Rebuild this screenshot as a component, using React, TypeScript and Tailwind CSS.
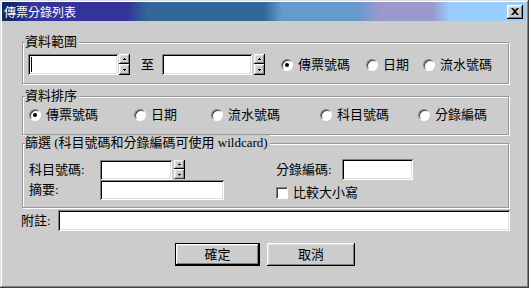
import type { ReactNode } from "react";

const sunken =
  "bg-white shadow-[inset_1px_1px_#808080,inset_-1px_-1px_#ffffff,inset_2px_2px_#000000,inset_-2px_-2px_#dfdfdf]";
const raised =
  "bg-[#cccccc] shadow-[inset_-1px_-1px_#000000,inset_1px_1px_#ffffff,inset_-2px_-2px_#808080,inset_2px_2px_#dfdfdf]";

function Spinner() {
  return (
    <div className="flex h-[21px] w-[11px] flex-col">
      <div className={`${raised} flex h-[10px] items-center justify-center`}>
        <svg width="3" height="2" viewBox="0 0 3 2">
          <path d="M1 0h1v1h1v1H0V1h1z" fill="#000" />
        </svg>
      </div>
      <div className={`${raised} flex h-[11px] items-center justify-center`}>
        <svg width="3" height="2" viewBox="0 0 3 2">
          <path d="M0 0h3v1H2v1H1V1H0z" fill="#000" />
        </svg>
      </div>
    </div>
  );
}

function Radio({ label, checked }: { label: string; checked?: boolean }) {
  return (
    <div className="flex items-center">
      <span className="flex h-3 w-3 items-center justify-center rounded-full border border-b-white border-l-[#808080] border-r-white border-t-[#808080] bg-white shadow-[inset_1px_1px_#404040]">
        {checked && <span className="h-1 w-1 rounded-full bg-black" />}
      </span>
      <span className="ml-[5px] leading-4">{label}</span>
    </div>
  );
}

function Group({ label, className, children }: { label: string; className: string; children: ReactNode }) {
  return (
    <div
      className={`relative w-[487px] border border-[#999999] shadow-[inset_1px_1px_#ffffff,1px_1px_#ffffff] ${className}`}
    >
      <span className="absolute left-[2px] top-[-9px] bg-[#cccccc] pr-[2px] leading-4 whitespace-nowrap">
        {label}
      </span>
      {children}
    </div>
  );
}

export default function App() {
  return (
    <div className="h-[288px] w-[529px] bg-[#cccccc] p-[2px] font-['Liberation_Serif','Noto_Sans_CJK_TC',serif] text-[13px] text-black shadow-[inset_-1px_-1px_#404040,inset_1px_1px_#dfdfdf,inset_-2px_-2px_#808080,inset_2px_2px_#ffffff]">
      {/* title bar */}
      <div className="flex h-[19px] w-[524px] items-center justify-between bg-[linear-gradient(90deg,#0c2a66_0px,#0c2a66_10px,#333399_28px,#333399_125px,#336699_145px,#336699_262px,#6699cc_280px,#6699cc_355px,#9999cc_378px,#9999cc_430px,#99ccff_448px,#99ccff_100%)] pl-[2px] pr-[3px]">
        <span className="font-['Noto_Sans_CJK_TC',sans-serif] text-[12px] leading-4 text-white">傳票分錄列表</span>
        <div className={`${raised} flex h-[14px] w-[16px] items-center justify-center`}>
          <svg width="8" height="7" viewBox="0 0 8 7">
            <path d="M0 0h2l2 2 2-2h2L5 3.5 8 7H6L4 5 2 7H0l3-3.5z" fill="#000" />
          </svg>
        </div>
      </div>

      <div className="flex flex-col pl-[19px]">
        {/* 資料範圍 */}
        <Group label="資料範圍" className="ml-[1px] mt-[21px] h-[42px] pl-[5px] pt-[11px]">
          <div className="flex h-[21px] items-center">
            <div className={`${sunken} relative h-[21px] w-[90px]`}>
              <span className="absolute left-[3px] top-[3px] h-[15px] w-px bg-black" />
            </div>
            <div className="ml-[1px]">
              <Spinner />
            </div>
            <span className="ml-[11px] leading-4">至</span>
            <div className={`${sunken} ml-[8px] h-[21px] w-[90px]`} />
            <div className="ml-[2px]">
              <Spinner />
            </div>
            <div className="ml-[16px] w-[85px]">
              <Radio label="傳票號碼" checked />
            </div>
            <div className="w-[57px]">
              <Radio label="日期" />
            </div>
            <Radio label="流水號碼" />
          </div>
        </Group>

        {/* 資料排序 */}
        <Group label="資料排序" className="ml-[1px] mt-[12px] h-[39px] pl-[6px] pt-[10px]">
          <div className="flex h-4 items-center">
            <div className="w-[105px]">
              <Radio label="傳票號碼" checked />
            </div>
            <div className="w-[77px]">
              <Radio label="日期" />
            </div>
            <div className="w-[109px]">
              <Radio label="流水號碼" />
            </div>
            <div className="w-[98px]">
              <Radio label="科目號碼" />
            </div>
            <Radio label="分錄編碼" />
          </div>
        </Group>

        {/* 篩選 */}
        <Group
          label="篩選 (科目號碼和分錄編碼可使用 wildcard)"
          className="ml-[1px] mt-[8px] h-[65px] pl-[6px] pt-[15px]"
        >
          <div className="flex">
            <div className="flex w-[247px] flex-col">
              <div className="flex h-[21px] items-center">
                <span className="w-[71px] leading-4">科目號碼:</span>
                <div className={`${sunken} h-[20px] w-[72px]`} />
                <div className="ml-[2px] scale-y-[0.95]">
                  <Spinner />
                </div>
              </div>
              <div className="flex h-[20px] items-center">
                <span className="w-[71px] leading-4">摘要:</span>
                <div className={`${sunken} h-[20px] w-[124px]`} />
              </div>
            </div>
            <div className="flex flex-col">
              <div className="flex h-[21px] items-center">
                <span className="w-[66px] leading-4">分錄編碼:</span>
                <div className={`${sunken} h-[21px] w-[71px]`} />
              </div>
              <div className="mt-[5px] flex items-center">
                <span className="h-3 w-3 border border-b-white border-l-[#808080] border-r-white border-t-[#808080] bg-white shadow-[inset_1px_1px_#404040]" />
                <span className="ml-[5px] leading-4">比較大小寫</span>
              </div>
            </div>
          </div>
        </Group>

        {/* 附註 */}
        <div className="mt-[2px] flex h-[21px] items-center">
          <span className="w-[37px] leading-4">附註:</span>
          <div className={`${sunken} h-[21px] w-[452px]`} />
        </div>

        {/* buttons */}
        <div className="mt-[12px] flex pl-[154px]">
          <div className="h-[23px] w-[85px] border border-black">
            <div className={`${raised} flex h-full items-center justify-center leading-4`}>確定</div>
          </div>
          <div className={`${raised} ml-[7px] flex h-[23px] w-[88px] items-center justify-center leading-4`}>
            取消
          </div>
        </div>
      </div>
    </div>
  );
}
